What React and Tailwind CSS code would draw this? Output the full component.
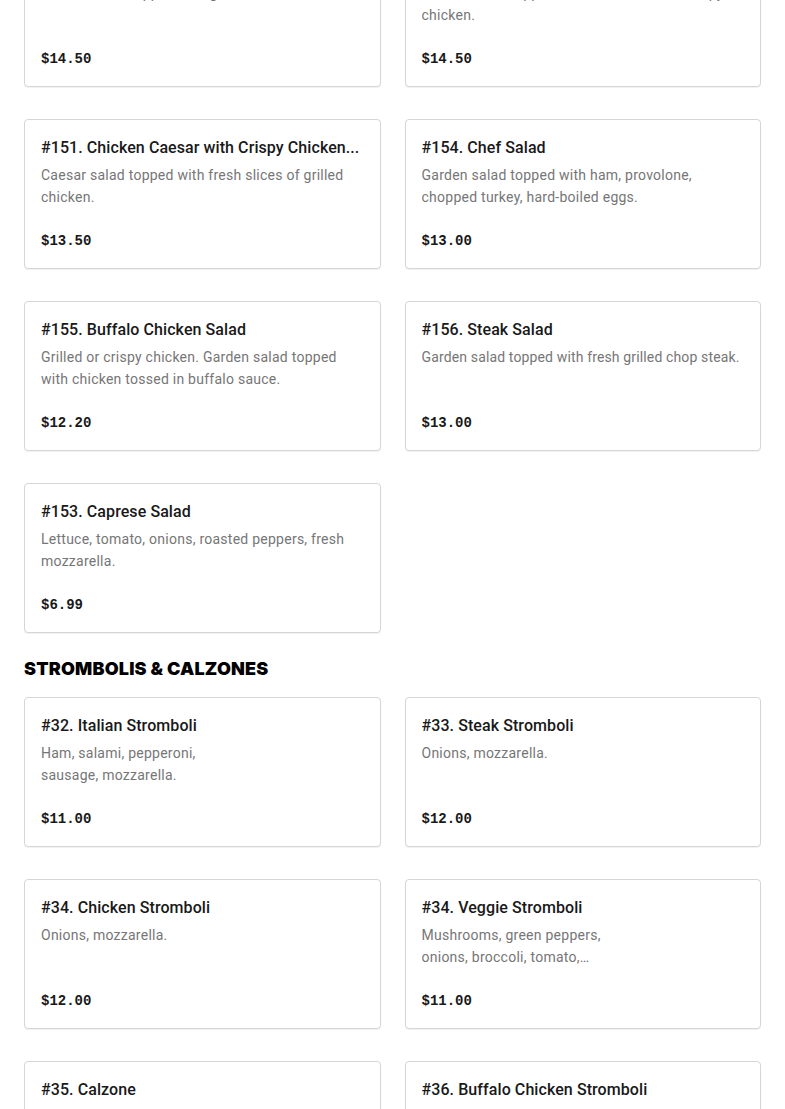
import React from "react";

const salads = [
  {
    name: "#150. Grilled Chicken Salad",
    desc: "Garden salad topped with grilled chicken.",
    price: "$14.50",
  },
  {
    name: "#152. Crispy Chicken Salad",
    desc: "Garden salad topped with fresh slices of crispy chicken.",
    price: "$14.50",
  },
  {
    name: "#151. Chicken Caesar with Crispy Chicken...",
    desc: "Caesar salad topped with fresh slices of grilled chicken.",
    price: "$13.50",
  },
  {
    name: "#154. Chef Salad",
    desc: "Garden salad topped with ham, provolone, chopped turkey, hard-boiled eggs.",
    price: "$13.00",
  },
  {
    name: "#155. Buffalo Chicken Salad",
    desc: "Grilled or crispy chicken. Garden salad topped with chicken tossed in buffalo sauce.",
    price: "$12.20",
  },
  {
    name: "#156. Steak Salad",
    desc: "Garden salad topped with fresh grilled chop steak.",
    price: "$13.00",
    tight: true,
  },
  {
    name: "#153. Caprese Salad",
    desc: "Lettuce, tomato, onions, roasted peppers, fresh mozzarella.",
    price: "$6.99",
  },
];

const strombolis = [
  { name: "#32. Italian Stromboli", desc: "Ham, salami, pepperoni, sausage, mozzarella.", price: "$11.00" },
  { name: "#33. Steak Stromboli", desc: "Onions, mozzarella.", price: "$12.00" },
  { name: "#34. Chicken Stromboli", desc: "Onions, mozzarella.", price: "$12.00" },
  {
    name: "#34. Veggie Stromboli",
    desc: "Mushrooms, green peppers, onions, broccoli, tomato, spinach, mozzarella.",
    price: "$11.00",
  },
  { name: "#35. Calzone", desc: "Ricotta, mozzarella.", price: "$11.00" },
  { name: "#36. Buffalo Chicken Stromboli", desc: "Chicken, buffalo sauce, mozzarella.", price: "$12.00" },
];

const MenuCard = ({ item, narrow }) => {
  let descClass = "mt-[4px] text-[14px] leading-[22px] text-[#767676] line-clamp-2";
  if (narrow) descClass += " tracking-[0.018em] max-w-[185px]";
  else if (item.tight) descClass += " tracking-[0.01em]";
  else descClass += " tracking-[0.018em]";

  return (
    <div className="h-[150px] flex flex-col bg-white border border-[#d6d6d6] rounded-[4px] shadow-[0_1px_1px_rgba(0,0,0,0.06)] px-4 pt-4 pb-[17px]">
      <h3 className="text-[16px] leading-6 font-medium tracking-[0.005em] text-[#191919] truncate">{item.name}</h3>
      <p className={descClass}>{item.desc}</p>
      <div className="mt-auto text-[14px] leading-5 font-bold text-[#191919] font-['Liberation_Mono',monospace]">
        {item.price}
      </div>
    </div>
  );
};

export default function App() {
  return (
    <div className="bg-white min-h-screen font-['Roboto','Noto_Sans',sans-serif] overflow-hidden">
      <div className="px-6 -mt-[63px]">
        {/* Salads */}
        <div className="grid grid-cols-2 gap-x-6 gap-y-8">
          {salads.map((item) => (
            <MenuCard key={item.name} item={item} />
          ))}
        </div>

        {/* Strombolis */}
        <h2 className="mt-6 mb-4 text-[18px] leading-[24px] font-black uppercase tracking-[0.01em] text-black font-['Inter',sans-serif]">
          Strombolis &amp; Calzones
        </h2>
        <div className="grid grid-cols-2 gap-x-6 gap-y-8 pb-10">
          {strombolis.map((item) => (
            <MenuCard key={item.name} item={item} narrow />
          ))}
        </div>
      </div>
    </div>
  );
}
